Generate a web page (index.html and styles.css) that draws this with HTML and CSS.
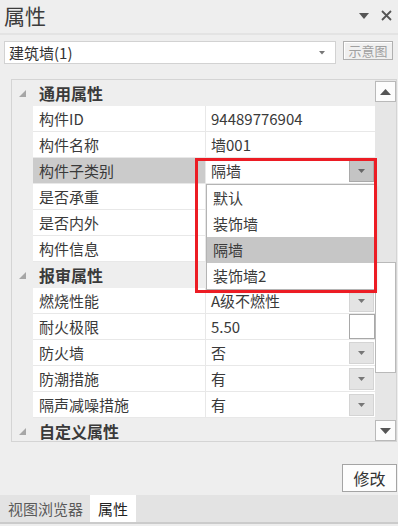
FILE: index.html
```html
<!DOCTYPE html>
<html lang="zh">
<head>
  <meta charset="UTF-8">
  <meta name="viewport" content="width=device-width, initial-scale=1">
  <title>属性</title>
  <link rel="stylesheet" href="styles.css">
</head>
<body>
  <div class="panel">

    <!-- TITELLEISTE -->
    <div class="titlebar">
      <span class="title">属性</span>
      <div class="title-tools">
        <svg width="10" height="6" viewBox="0 0 10 6"><polygon points="0,0 10,0 5,6" fill="#555"/></svg>
        <svg width="11" height="11" viewBox="0 0 11 11"><path d="M1 1 L10 10 M10 1 L1 10" stroke="#555" stroke-width="1.8"/></svg>
      </div>
    </div>

    <!-- AUSWAHL -->
    <div class="toolbar">
      <div class="combo">
        <span>建筑墙(1)</span>
        <svg width="6" height="4" viewBox="0 0 6 4"><polygon points="0,0 6,0 3,3.5" fill="#777"/></svg>
      </div>
      <button class="btn-schema">示意图</button>
    </div>

    <!-- EIGENSCHAFTEN -->
    <div class="grid">
      <div class="rows">
        <div class="row section">
          <span class="gutter"><svg width="7" height="7" viewBox="0 0 7 7"><polygon points="7,0 7,7 0,7" fill="#a6a6a6"/></svg></span>
          <span class="name">通用属性</span>
        </div>
        <div class="row">
          <span class="gutter"></span><span class="name">构件ID</span><span class="value">94489776904</span>
        </div>
        <div class="row">
          <span class="gutter"></span><span class="name">构件名称</span><span class="value">墙001</span>
        </div>
        <div class="row selected">
          <span class="gutter"></span><span class="name">构件子类别</span>
          <span class="value">隔墙<span class="drop-btn active"><svg width="7" height="4" viewBox="0 0 7 4"><polygon points="0,0 7,0 3.5,4" fill="#666"/></svg></span></span>
        </div>
        <div class="row">
          <span class="gutter"></span><span class="name">是否承重</span><span class="value"></span>
        </div>
        <div class="row">
          <span class="gutter"></span><span class="name">是否内外</span><span class="value"></span>
        </div>
        <div class="row">
          <span class="gutter"></span><span class="name">构件信息</span><span class="value"></span>
        </div>
        <div class="row section">
          <span class="gutter"><svg width="7" height="7" viewBox="0 0 7 7"><polygon points="7,0 7,7 0,7" fill="#a6a6a6"/></svg></span>
          <span class="name">报审属性</span>
        </div>
        <div class="row">
          <span class="gutter"></span><span class="name">燃烧性能</span>
          <span class="value">A级不燃性<span class="drop-btn"><svg width="7" height="4" viewBox="0 0 7 4"><polygon points="0,0 7,0 3.5,4" fill="#777"/></svg></span></span>
        </div>
        <div class="row">
          <span class="gutter"></span><span class="name">耐火极限</span>
          <span class="value">5.50<span class="edit-box"></span></span>
        </div>
        <div class="row">
          <span class="gutter"></span><span class="name">防火墙</span>
          <span class="value">否<span class="drop-btn"><svg width="7" height="4" viewBox="0 0 7 4"><polygon points="0,0 7,0 3.5,4" fill="#777"/></svg></span></span>
        </div>
        <div class="row">
          <span class="gutter"></span><span class="name">防潮措施</span>
          <span class="value">有<span class="drop-btn"><svg width="7" height="4" viewBox="0 0 7 4"><polygon points="0,0 7,0 3.5,4" fill="#777"/></svg></span></span>
        </div>
        <div class="row">
          <span class="gutter"></span><span class="name">隔声减噪措施</span>
          <span class="value">有<span class="drop-btn"><svg width="7" height="4" viewBox="0 0 7 4"><polygon points="0,0 7,0 3.5,4" fill="#777"/></svg></span></span>
        </div>
        <div class="row section">
          <span class="gutter"><svg width="7" height="7" viewBox="0 0 7 7"><polygon points="7,0 7,7 0,7" fill="#a6a6a6"/></svg></span>
          <span class="name">自定义属性</span>
        </div>
      </div>

      <!-- Scrollbar -->
      <div class="scrollbar">
        <span class="scroll-btn"><svg width="11" height="6" viewBox="0 0 11 6"><polygon points="0,6 11,6 5.5,0" fill="#555"/></svg></span>
        <div class="track"><span class="thumb"></span></div>
        <span class="scroll-btn"><svg width="11" height="6" viewBox="0 0 11 6"><polygon points="0,0 11,0 5.5,6" fill="#555"/></svg></span>
      </div>

      <!-- Aufgeklappte Liste -->
      <ul class="popup">
        <li>默认</li>
        <li>装饰墙</li>
        <li class="hover">隔墙</li>
        <li>装饰墙2</li>
      </ul>

      <!-- Markierung -->
      <div class="mark"></div>
    </div>

    <!-- FUSSBEREICH -->
    <div class="footer">
      <button class="btn-edit">修改</button>
    </div>

    <div class="tabs">
      <span class="tab">视图浏览器</span>
      <span class="tab active">属性</span>
    </div>
  </div>
</body>
</html>
```

FILE: styles.css
```css
/* RESET */
* {
  margin: 0;
  padding: 0;
  box-sizing: border-box;
}

body, html {
  width: 398px;
  height: 526px;
  font-family: "Noto Sans CJK SC", sans-serif;
  color: #3a3a3a;
  background-color: #fff;
  overflow: hidden;
}

.panel {
  display: flex;
  flex-direction: column;
  height: 526px;
  background: #eeeeee;
}

/* TITELLEISTE */
.titlebar {
  height: 35px;
  display: flex;
  justify-content: space-between;
  align-items: center;
  padding: 0 6px 2px 4px;
  border-bottom: 2px solid #e3e3e3;
}

.title {
  font-size: 21px;
  line-height: 1;
  color: #3c3c3c;
}

.title-tools {
  display: flex;
  align-items: center;
  gap: 12px;
}

/* AUSWAHL */
.toolbar {
  height: 44px;
  display: flex;
  align-items: flex-start;
  padding: 6px 5px 0 4px;
  gap: 7px;
}

.combo {
  width: 332px;
  height: 23px;
  background: #fff;
  border: 1px solid #d2d2d2;
  display: flex;
  justify-content: space-between;
  align-items: center;
  padding: 0 10px 0 4px;
  font-size: 15px;
  color: #333;
}

.btn-schema {
  width: 50px;
  height: 19px;
  font-family: inherit;
  font-size: 13px;
  line-height: 1;
  color: #a0a0a0;
  background: #f0f0f0;
  border: 1px solid #b0b0b0;
  box-shadow: inset 1px 1px 0 #fff;
}

/* EIGENSCHAFTEN */
.grid {
  position: relative;
  height: 363px;
  margin-left: 11px;
  width: 386px;
  border: 1px solid #d4d4d4;
  display: flex;
  overflow: hidden;
}

.rows {
  width: 363px;
}

.row {
  display: grid;
  grid-template-columns: 21px 172px 170px;
  height: 26px;
  font-size: 15px;
}

.gutter {
  background: #eeeeee;
  display: flex;
  align-items: center;
  justify-content: center;
  padding-top: 1px;
}

.name, .value {
  background: #fff;
  border-bottom: 1px solid #e8e8e8;
  display: flex;
  align-items: center;
  padding-left: 6px;
  white-space: nowrap;
}

.value {
  border-left: 1px solid #e8e8e8;
  padding-left: 5px;
  position: relative;
}

.row.section .name {
  grid-column: 2 / 4;
  background: #eeeeee;
  border-bottom: none;
  font-weight: bold;
  font-size: 16px;
  color: #3a3a3a;
}

.row.selected .name {
  background: #cbcbcb;
}

.drop-btn, .edit-box {
  position: absolute;
  right: 1px;
  top: 2px;
  width: 25px;
  height: 22px;
  display: flex;
  align-items: center;
  justify-content: center;
  background: #e4e4e4;
  border: 1px solid #d4d4d4;
}

.drop-btn.active {
  background: #c4c4c4;
  border-color: #a9a9a9;
}

.edit-box {
  top: 0;
  right: 0;
  width: 26px;
  height: 25px;
  background: #fff;
  border-color: #a8a8a8;
}

/* Scrollbar */
.scrollbar {
  width: 21px;
  background: #e6e6e6;
  display: flex;
  flex-direction: column;
  padding-top: 1px;
}

.scroll-btn {
  height: 21px;
  background: #fcfcfc;
  border: 1px solid #b9b9b9;
  display: flex;
  align-items: center;
  justify-content: center;
}

.track {
  flex: 1;
}

.thumb {
  display: block;
  margin-top: 160px;
  height: 111px;
  background: #fff;
  border: 1px solid #b9b9b9;
}

/* Aufgeklappte Liste */
.popup {
  position: absolute;
  left: 194px;
  top: 104px;
  width: 169px;
  list-style: none;
  background: #fff;
  border: 1px solid #b4b4b4;
  box-shadow: 2px 2px 3px rgba(0, 0, 0, 0.12);
  font-size: 15px;
}

.popup li {
  height: 26px;
  line-height: 26px;
  padding-left: 6px;
}

.popup li.hover {
  background: #c6c6c6;
}

.mark {
  position: absolute;
  left: 183px;
  top: 78px;
  width: 182px;
  height: 135px;
  border: 3px solid #ec1c24;
}

/* FUSSBEREICH */
.footer {
  height: 53px;
  display: flex;
  justify-content: flex-end;
  align-items: flex-start;
  padding: 22px 1px 0 0;
}

.btn-edit {
  width: 55px;
  height: 28px;
  font-family: inherit;
  font-size: 16px;
  color: #333;
  background: #fdfdfd;
  border: 1px solid #a4a4a4;
}

.tabs {
  height: 29px;
  display: flex;
  align-items: stretch;
  padding-left: 2px;
  background: #e3e3e3;
  border-bottom: 2px solid #cbcbcb;
}

.tab {
  display: flex;
  align-items: center;
  padding: 0 7px 0 6px;
  font-size: 15px;
  color: #5a5a5a;
}

.tab.active {
  background: #fff;
  color: #222;
  padding: 0 8px;
}
```
